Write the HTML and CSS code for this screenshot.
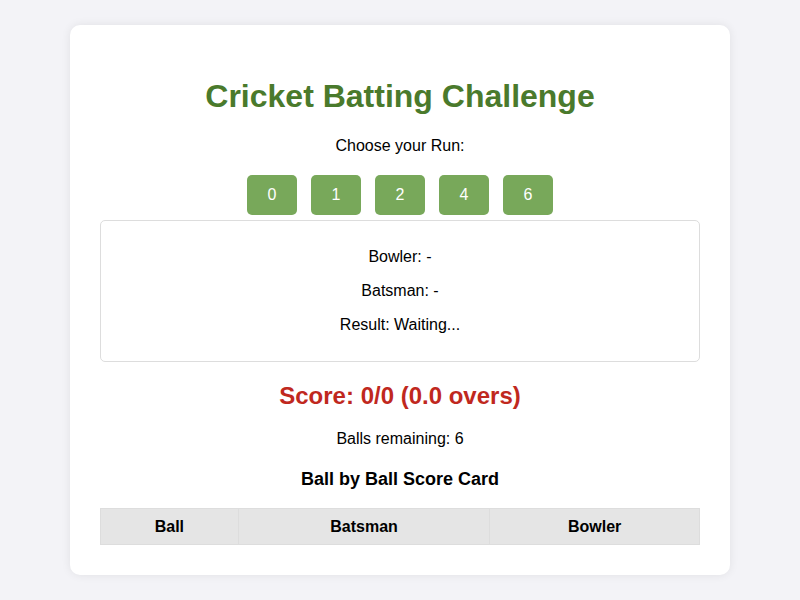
FILE: index.html
```html
<!DOCTYPE html>
<html lang="en">
<head>
    <meta charset="UTF-8">
    <meta name="viewport" content="width=device-width, initial-scale=1.0">
    <title>Cricket Batting Challenge</title>
    <link rel="stylesheet" href="styles.css">
</head>
<body>
    <div class="container">
        <h1>Cricket Batting Challenge</h1>
        <p class="prompt">Choose your Run:</p>

        <div class="run-buttons">
            <button class="run-btn" data-run="0">0</button>
            <button class="run-btn" data-run="1">1</button>
            <button class="run-btn" data-run="2">2</button>
            <button class="run-btn" data-run="4">4</button>
            <button class="run-btn" data-run="6">6</button>
        </div>

        <div class="result-box">
            <p>Bowler: <span id="bowler">-</span></p>
            <p>Batsman: <span id="batsman">-</span></p>
            <p>Result: <span id="result">Waiting...</span></p>
        </div>

        <h2 class="score" id="score">Score: 0/0 (0.0 overs)</h2>
        <p class="balls-left">Balls remaining: <span id="balls">6</span></p>

        <h3>Ball by Ball Score Card</h3>
        <table class="score-card">
            <thead>
                <tr>
                    <th class="col-ball">Ball</th>
                    <th class="col-batsman">Batsman</th>
                    <th class="col-bowler">Bowler</th>
                </tr>
            </thead>
            <tbody id="score-rows"></tbody>
        </table>
    </div>
</body>
</html>
```

FILE: styles.css
```css
body {
    margin: 0;
    padding: 25px 70px 26px;
    background-color: #f3f3f7;
    font-family: "Liberation Sans", Arial, sans-serif;
    color: #000;
}

.container {
    background-color: #fff;
    border-radius: 10px;
    box-shadow: 0 0 10px rgba(0, 0, 0, 0.08);
    padding: 30px;
    text-align: center;
}

h1 {
    color: #4a7a2c;
    font-size: 32px;
    margin: 23px 0 22px;
    line-height: 37px;
}

.prompt {
    font-size: 16px;
    margin: 16px 0;
}

.run-buttons {
    display: flex;
    justify-content: center;
    gap: 14px;
    margin-top: 20px;
}

.run-btn {
    width: 50px;
    height: 40px;
    background-color: #78a85a;
    color: #fff;
    border: none;
    border-radius: 5px;
    font-family: inherit;
    font-size: 16px;
    cursor: pointer;
}

.run-btn:hover {
    background-color: #689a4b;
}

.result-box {
    margin-top: 5px;
    border: 1px solid #ddd;
    border-radius: 5px;
    padding: 11px 10px;
}

.result-box p {
    margin: 16px 0;
    line-height: 18px;
}

.score {
    color: #c0281e;
    font-size: 24px;
    line-height: 28px;
    margin: 20px 0 20px;
}

.balls-left {
    margin: 16px 0;
    line-height: 18px;
}

h3 {
    font-size: 18px;
    line-height: 21px;
    margin: 21px 0 18px;
}

.score-card {
    width: 100%;
    border-collapse: collapse;
}

.score-card th {
    background-color: #e5e5e5;
    border: 1px solid #ddd;
    padding: 8px;
    font-size: 16px;
    line-height: 19px;
}

.col-ball {
    width: 23%;
}

.col-batsman {
    width: 42%;
}
```
